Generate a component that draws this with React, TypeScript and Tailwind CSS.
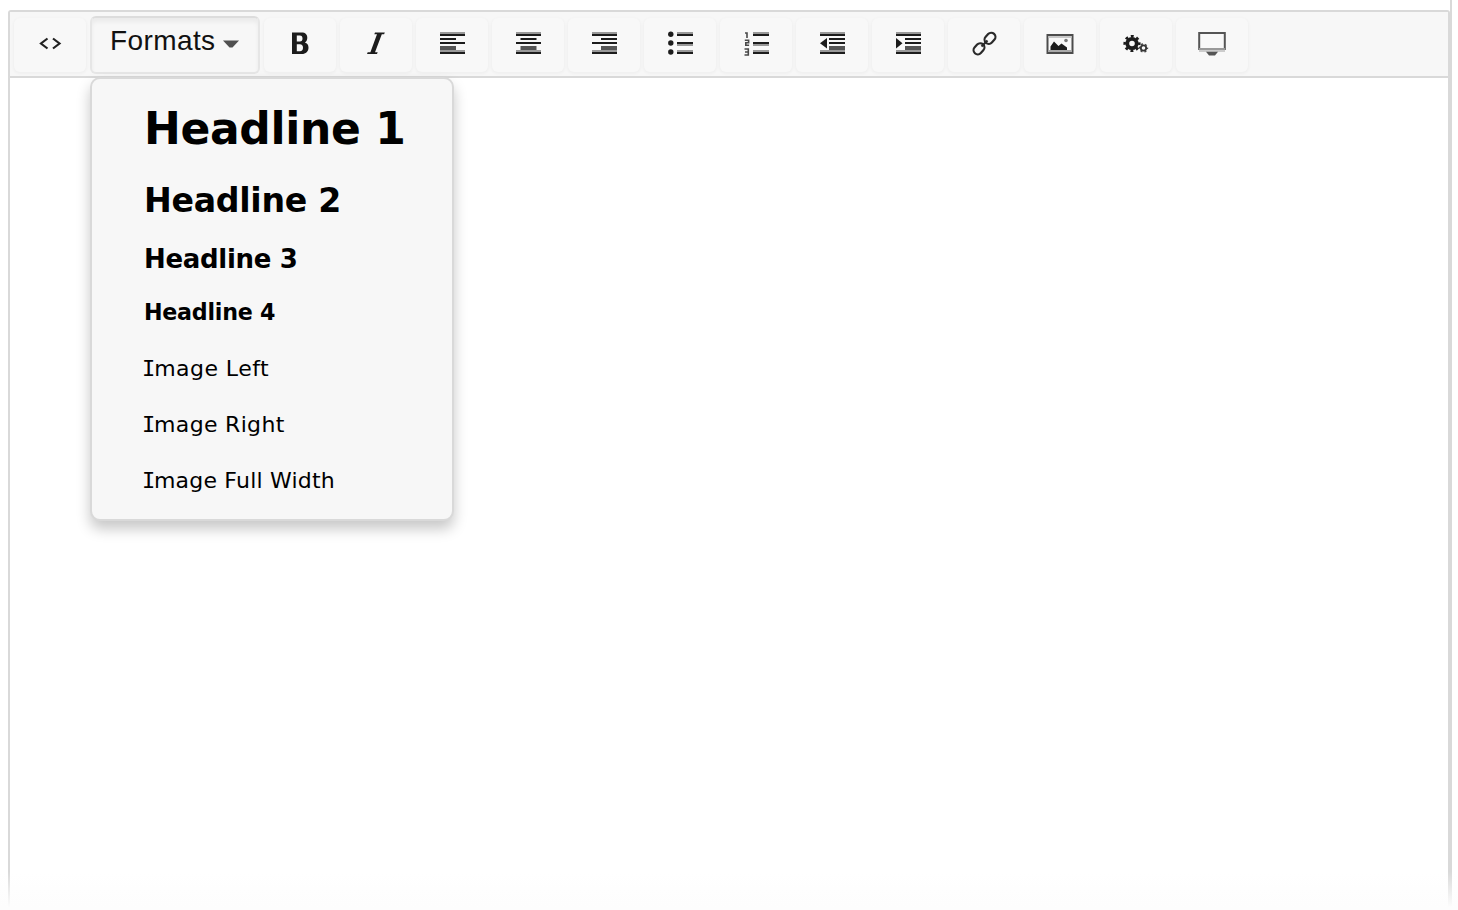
import type { ReactNode } from "react";

type Bar = [x: number, y: number, w: number, h: number, fill: string];

const INK = "#1c1c1c";
const MID = "#555555";
const SOFT = "#999999";

/** 28x28 canvas shared by all toolbar glyphs. */
function Glyph({ children }: { children: ReactNode }) {
  return (
    <svg width="28" height="28" viewBox="0 0 28 28" fill="none" className="block">
      {children}
    </svg>
  );
}

function Bars({ bars }: { bars: Bar[] }) {
  return (
    <>
      {bars.map(([x, y, w, h, fill], i) => (
        <rect key={i} x={x} y={y} width={w} height={h} fill={fill} />
      ))}
    </>
  );
}

function lines(x: number, w: number): Bar[] {
  return [
    [2, 2, 25, 2, SOFT],
    [2, 4, 25, 2, INK],
    [x, 8, w, 2, INK],
    [2, 12, 25, 2, INK],
    [x, 16, w, 4, MID],
    [2, 20, 25, 2, SOFT],
    [2, 22, 25, 2, INK],
  ];
}

const listLines: Bar[] = [
  [11, 2, 16, 2, SOFT],
  [11, 4, 16, 2, INK],
  [11, 12, 16, 2, INK],
  [11, 14, 16, 2, SOFT],
  [11, 20, 16, 2, SOFT],
  [11, 22, 16, 2, INK],
];

const icons: { label: string; art: ReactNode }[] = [
  {
    label: "Bold",
    art: (
      <path
        fillRule="evenodd"
        fill={INK}
        d="M6 2.500h9.500c4 0 5.800 2 5.800 5.200c0 2.300-1 3.900-2.400 4.800c2.300.7 3.600 2.500 3.600 5c0 4-2.600 6.500-6.800 6.500H6zM10.800 5.500v6h3c1.900 0 2.700-1 2.700-3s-.8-3-2.700-3zM10.800 14.300v7h3.200c1.900 0 3-1.200 3-3.500s-1.100-3.500-3-3.500z"
      />
    ),
  },
  {
    label: "Italic",
    art: <path fill={INK} d="M13 2.500h9.800l-.7 1.700h-2.300L13 22.300h2.700l-.7 1.700H5l.7-1.700h2.700L15 4.200h-2.700z" />,
  },
  { label: "Align left", art: <Bars bars={lines(2, 16)} /> },
  { label: "Align center", art: <Bars bars={lines(6.5, 16)} /> },
  { label: "Align right", art: <Bars bars={lines(11, 16)} /> },
  {
    label: "Bullet list",
    art: (
      <>
        <Bars bars={listLines} />
        <circle cx="4.800" cy="4.200" r="2.700" fill={INK} />
        <circle cx="4.800" cy="13" r="2.700" fill={INK} />
        <circle cx="4.800" cy="22" r="2.700" fill={INK} />
      </>
    ),
  },
  {
    label: "Numbered list",
    art: (
      <>
        <Bars bars={listLines} />
        <path
          stroke="#4a4a4a"
          strokeWidth="1.600"
          d="M3 3h2v5M2.800 10.300h3.800v2.500H3.800v2.400h3.300M2.500 19h3.800v6H2.500M3 22h3.300"
        />
      </>
    ),
  },
  {
    label: "Outdent",
    art: (
      <>
        <Bars bars={lines(11, 16)} />
        <rect x="2" y="11" width="9" height="4" fill="#f8f8f8" />
        <path fill={INK} d="M9 8v10.500L2 13.200z" />
      </>
    ),
  },
  {
    label: "Indent",
    art: (
      <>
        <Bars bars={lines(11, 16)} />
        <rect x="2" y="11" width="9" height="4" fill="#f8f8f8" />
        <path fill={INK} d="M2 8v10.500l6.500-5.300z" />
      </>
    ),
  },
  {
    label: "Link",
    art: (
      <g stroke="#2a2a2a" strokeWidth="2.200">
        <rect x="-6" y="-4.200" width="12" height="8.400" rx="4.200" transform="translate(20 8.300) rotate(-47)" />
        <rect x="-6" y="-4.200" width="12" height="8.400" rx="4.200" transform="translate(9 18.800) rotate(-47)" />
        <path d="M11.500 16.500l6-6" />
      </g>
    ),
  },
  {
    label: "Image",
    art: (
      <>
        <rect x="1.500" y="5" width="25" height="18" stroke="#4c4c4c" strokeWidth="2" />
        <rect x="2.500" y="6" width="23" height="2" fill="#c8c8c8" />
        <rect x="2.500" y="20" width="23" height="2" fill="#aaaaaa" />
        <path fill={INK} d="M4.500 20v-3.500l3.500-5l4.500 4.500l3-2.500l5.500 4v2.500z" />
        <circle cx="20" cy="10.500" r="1.800" fill="#777777" />
      </>
    ),
  },
  {
    label: "Macro",
    art: (
      <>
        <circle cx="10" cy="13.500" r="4.700" stroke={INK} strokeWidth="3.800" />
        <circle cx="10" cy="13.500" r="7.300" stroke={INK} strokeWidth="2.600" strokeDasharray="2.867 2.867" strokeDashoffset="1.433" />
        <circle cx="21.500" cy="18" r="2.700" stroke="#333333" strokeWidth="1.800" />
        <circle cx="21.500" cy="18" r="4" stroke="#444444" strokeWidth="1.400" strokeDasharray="2.094 2.094" strokeDashoffset="1.047" />
      </>
    ),
  },
  {
    label: "Embed",
    art: (
      <>
        <path stroke="#555555" strokeWidth="2" d="M1.200 20V3h25.600v17" />
        <path fill="#999999" d="M1 18h26v2H1z" />
        <path fill="#cccccc" d="M1 20h26v2H1z" />
        <path fill="#555555" d="M8 21.800h12L17 25.500h-6z" />
      </>
    ),
  },
];

function ToolButton({ label, children }: { label: string; children: ReactNode }) {
  return (
    <button
      aria-label={label}
      className="flex h-[54px] w-[72px] shrink-0 items-start justify-center rounded-md bg-[#f8f8f8] pt-3 shadow-[0_1px_3px_1px_rgba(0,0,0,0.03)]"
    >
      <Glyph>{children}</Glyph>
    </button>
  );
}

/** Capital I with slab serifs, as in Verdana. */
function SerifI() {
  return <span className="-ml-[2px] -mr-[1.500px] font-['DejaVu_Sans_Mono',monospace]">I</span>;
}

const imageRow = "h-[56px] text-[22px] leading-[57px]";

function FormatsMenu() {
  return (
    <div className="absolute top-[61px] left-0 z-10 flex h-[444px] w-[364px] flex-col rounded-[10px] border-2 border-[#d9d9d9] bg-[#f7f7f7] pt-[19px] pl-[52px] font-['DejaVu_Sans',Verdana,sans-serif] whitespace-nowrap text-black shadow-[0_8px_14px_rgba(0,0,0,0.22)]">
      <div className="h-[74px] text-[44px] leading-[62px] font-bold tracking-[-0.350px]">Headline 1</div>
      <div className="h-[59px] text-[33.200px] leading-[58px] font-bold tracking-[-0.300px]">Headline 2</div>
      <div className="h-[53px] text-[26px] leading-[56px] font-bold tracking-[-0.300px]">Headline 3</div>
      <div className="h-[56px] text-[22.200px] leading-[56px] font-bold tracking-[-0.250px]">Headline 4</div>
      <div className={`${imageRow} tracking-[0.450px]`}>
        <SerifI />
        mage Left
      </div>
      <div className={`${imageRow} tracking-[0.320px]`}>
        <SerifI />
        mage Right
      </div>
      <div className={`${imageRow} tracking-[0.200px]`}>
        <SerifI />
        mage Full Width
      </div>
    </div>
  );
}

export default function App() {
  return (
    <div className="h-[910px] w-full overflow-hidden bg-white">
      <div className="relative h-full w-[1452px] border-r-2 border-[#d9d9d9] pt-2.5 pl-2">
        <div className="h-full rounded-[3px] border-2 border-[#d9d9d9]">
          <div className="flex h-[66px] items-start gap-1 border-b-2 border-[#d9d9d9] bg-[#f7f7f7] pt-1.5 pl-1">
            <ToolButton label="Source code">
              <path stroke="#222222" strokeWidth="2.200" d="M11.500 8.500L5 13.500l6.500 5M17 8.500l6.500 5L17 18.500" />
            </ToolButton>
            <div className="relative -mt-0.5 h-[58px] w-[170px] shrink-0">
              <button className="flex h-[58px] w-full items-start rounded-md border-2 border-[#e6e6e6] border-t-[#dcdcdc] bg-[#f7f7f7] pl-[18px] font-['Liberation_Sans',Arial,sans-serif] text-[28px] leading-[46px] tracking-[0.400px] text-[#111] shadow-[inset_0_4px_4px_rgba(0,0,0,0.05)]">
                Formats
                <svg width="16" height="8" viewBox="0 0 16 8" className="mt-[21.500px] ml-[8px]">
                  <path d="M0 .5h16L9.500 7.500h-3z" fill="#505050" />
                </svg>
              </button>
              <FormatsMenu />
            </div>
            {icons.map(({ label, art }) => (
              <ToolButton key={label} label={label}>
                {art}
              </ToolButton>
            ))}
          </div>
        </div>
      </div>
      <div className="pointer-events-none absolute top-[855px] left-0 h-[55px] w-full bg-linear-to-b from-[#fdfdfd]/0 from-30% to-[#fdfdfd] to-95%" />
    </div>
  );
}
